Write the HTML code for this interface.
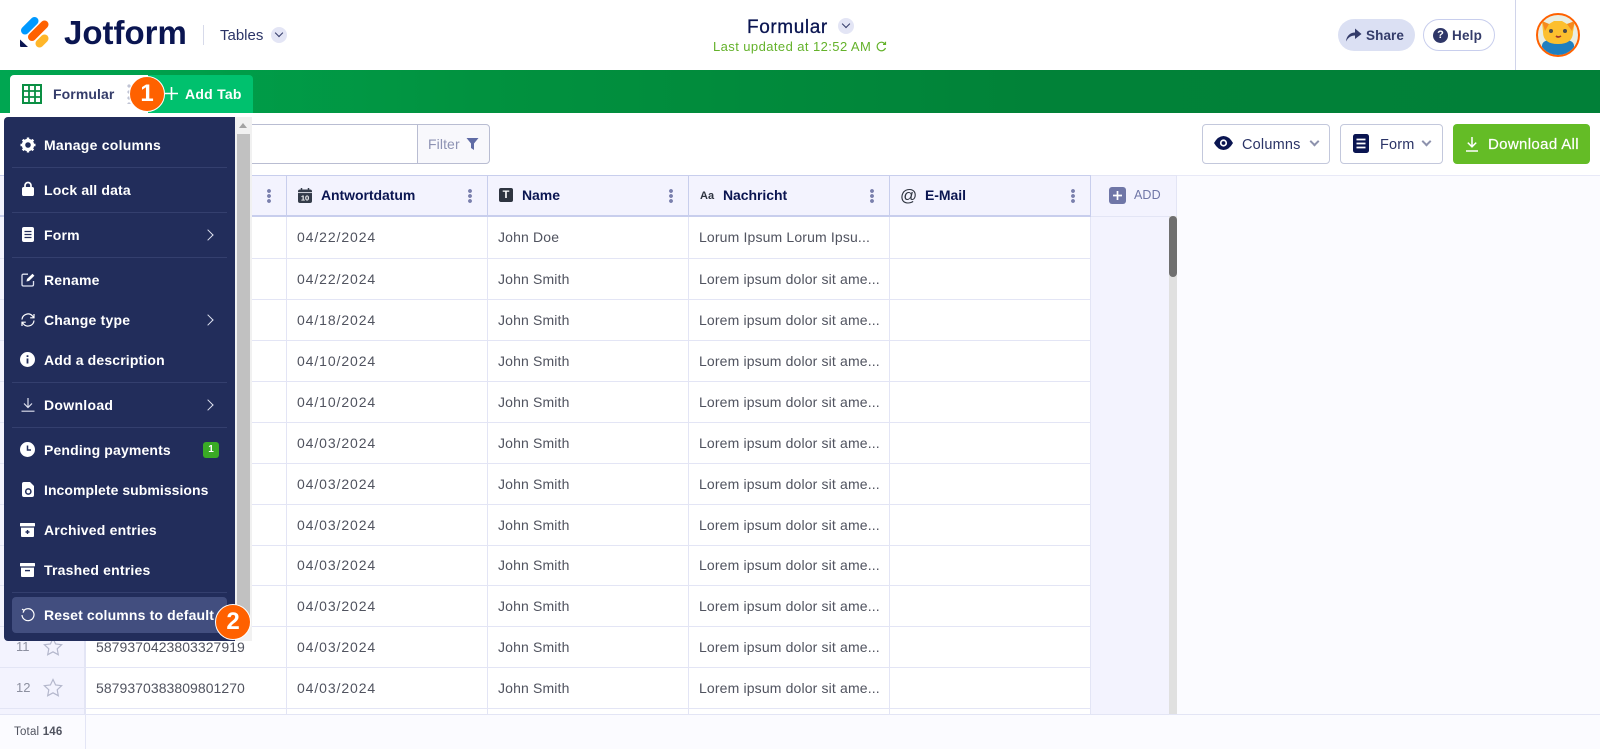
<!DOCTYPE html>
<html><head><meta charset="utf-8"><title>Formular</title>
<style>
*{box-sizing:border-box}
html,body{margin:0;padding:0;width:1600px;height:749px;overflow:hidden;background:#fff;font-family:"Liberation Sans",sans-serif;color:#0a1551}
.a{position:absolute;white-space:nowrap}
svg{display:block}
#t{position:absolute;left:0;top:175px;width:1091px;height:539px;overflow:hidden;background:#fff}
.hc{position:absolute;top:0;height:42px;background:#f3f3fe;border:1px solid #c8ceed;border-left:0;border-bottom-width:2px;font-size:14px;font-weight:bold;line-height:38px;letter-spacing:-.05px}
.dots{position:absolute;top:13px;right:15px;width:4px;height:14px;background:radial-gradient(circle at 2px 2px,#7a80ad 1.8px,transparent 2px) 0 0/4px 5px}
.r{position:absolute;left:0;width:1091px;height:41px;border-bottom:1px solid #e3e5f5;font-size:14px;color:#50535f;line-height:40px}
.r span{position:absolute;top:0;white-space:nowrap}
.n{left:16px;color:#8d90a0;font-size:13px}
.id{left:96px;letter-spacing:.05px}
.d{left:297px;letter-spacing:.9px}
.nm{left:498px;letter-spacing:.15px}
.m{left:699px;letter-spacing:.15px}
.v{position:absolute;top:42px;bottom:0;width:1px;background:#e3e5f5}
.s{position:absolute;left:43px;top:10px}
#menu{position:absolute;left:4px;top:117px;width:231px;height:524px;background:#222d5b;border-radius:4px 0 0 4px}
.i{position:absolute;left:40px;color:#fff;font-size:14px;font-weight:bold;letter-spacing:.2px;white-space:nowrap;line-height:18px}
.dv{position:absolute;left:8px;width:215px;height:1px;background:#343f6e}
.ic{position:absolute;left:16px}
.ch{position:absolute;left:200px;width:8px;height:8px;border-top:1.6px solid #dfe2f0;border-right:1.6px solid #dfe2f0;transform:rotate(45deg)}
.btn{position:absolute;top:124px;height:40px;background:#fff;border:1px solid #c3c8dc;border-radius:4px}
.cv{position:absolute;width:7px;height:7px;border-right:2px solid #8d92ad;border-bottom:2px solid #8d92ad;transform:rotate(45deg)}
.num{position:absolute;width:36px;height:36px;border-radius:50%;background:#ff6100;border:1.5px solid #fff;color:#fff;font-size:24px;font-weight:bold;text-align:center;line-height:33px;z-index:9}
</style></head><body>

<!-- top bar -->
<svg class="a" style="left:20px;top:16px" width="30" height="32" viewBox="0 0 30 32">
<path d="M5 14.5L14.5 5" stroke="#0099ff" stroke-width="8" stroke-linecap="round"/>
<path d="M12 21L24.5 8.5" stroke="#ff6100" stroke-width="8" stroke-linecap="round"/>
<path d="M19.5 27.5L24.5 22.5" stroke="#ffb629" stroke-width="8" stroke-linecap="round"/>
<path d="M0 23.5V30Q0 31 1 31H8Z" fill="#0a1551"/>
</svg>
<div class="a" style="left:64px;top:14px;font-size:33px;font-weight:bold;line-height:38px">Jotform</div>
<div class="a" style="left:203px;top:25px;width:1px;height:20px;background:#d7daea"></div>
<div class="a" style="left:220px;top:27px;font-size:15px;line-height:18px;color:#2b3467">Tables</div>
<div class="a" style="left:271px;top:27px;width:16px;height:16px;border-radius:50%;background:#e3e5f5"></div>
<div class="cv" style="left:276px;top:30px;width:6px;height:6px;border-color:#343c6a;border-width:1.3px"></div>

<div class="a" style="left:747px;top:17px;font-size:19px;line-height:22px;letter-spacing:.6px;-webkit-text-stroke:.3px #0a1551">Formular</div>
<div class="a" style="left:838px;top:18px;width:16px;height:16px;border-radius:50%;background:#e3e5f5"></div>
<div class="cv" style="left:843px;top:21px;width:6px;height:6px;border-color:#343c6a;border-width:1.3px"></div>
<div class="a" style="left:713px;top:39px;font-size:13px;line-height:16px;color:#64b22b;letter-spacing:.42px">Last updated at 12:52 AM</div>
<svg class="a" style="left:876px;top:41px" width="11" height="11" viewBox="0 0 11 11"><path d="M9.5 7A4.3 4.3 0 1 1 9 3M9.5 .8V3.4H7" fill="none" stroke="#64b22b" stroke-width="1.2"/></svg>

<div class="a" style="left:1338px;top:19px;width:77px;height:32px;border-radius:16px;background:#dbe0f3"></div>
<svg class="a" style="left:1346px;top:28px" width="16" height="14" viewBox="0 0 16 14"><path d="M0 13.5C.5 8 4 4.5 9 4.5V.5L15.5 6 9 11V7.5C5 7.5 2 9.5 0 13.5Z" fill="#343c6a"/></svg>
<div class="a" style="left:1366px;top:27px;font-size:13.5px;font-weight:bold;line-height:17px;color:#343c6a;letter-spacing:.1px">Share</div>
<div class="a" style="left:1423px;top:19px;width:72px;height:32px;border-radius:16px;border:1px solid #c8ceed;background:#fff"></div>
<div class="a" style="left:1433px;top:28px;width:15px;height:15px;border-radius:50%;background:#2f3768;color:#fff;font-size:11px;font-weight:bold;text-align:center;line-height:15px">?</div>
<div class="a" style="left:1452px;top:27px;font-size:13.5px;font-weight:bold;line-height:17px;color:#343c6a;letter-spacing:.2px">Help</div>
<div class="a" style="left:1515px;top:0;width:1px;height:70px;background:#d0d4ea"></div>
<svg class="a" style="left:1536px;top:13px" width="44" height="44" viewBox="0 0 44 44">
<defs><clipPath id="c"><circle cx="22" cy="22" r="20"/></clipPath></defs>
<circle cx="22" cy="22" r="21" fill="#e9eee2" stroke="#ff6100" stroke-width="2"/>
<g clip-path="url(#c)">
<path d="M6 44V33Q6 28 13 27H31Q38 28 38 33V44Z" fill="#1e7fc0"/>
<path d="M6 8L13 11 18 8H26L31 11 39 8 37 19Q37 31 22 31 7 31 7 19Z" fill="#fcbf2e"/>
<path d="M6 8L13 11 9 18ZM39 8L31 11 36 18Z" fill="#f58a1f"/>
<circle cx="15" cy="18" r="2" fill="#4a4a4a"/><circle cx="29" cy="18" r="2" fill="#4a4a4a"/>
<path d="M20 23Q22 25 25 23" stroke="#a0342a" stroke-width="1.6" fill="none"/>
</g></svg>

<!-- green bar -->
<div class="a" style="left:0;top:70px;width:1600px;height:43px;background:linear-gradient(90deg,#00a651,#01923f 30%,#018238 65%,#018038)"></div>
<div class="a" style="left:10px;top:75px;width:243px;height:38px;background:#00c16e;border-radius:4px 4px 0 0"></div>
<div class="a" style="left:10px;top:75px;width:138px;height:38px;background:#fff;border-radius:4px 0 0 0"></div>
<svg class="a" style="left:22px;top:84px" width="20" height="20" viewBox="0 0 20 20"><rect x="1" y="1" width="18" height="18" fill="none" stroke="#0a8f43" stroke-width="2"/><path d="M1 7H19M1 13H19M7 1V19M13 1V19" stroke="#0a8f43" stroke-width="1.8"/></svg>
<div class="a" style="left:53px;top:85px;font-size:14px;font-weight:bold;line-height:18px;color:#343c6a;letter-spacing:.1px">Formular</div>
<div class="a" style="left:127px;top:84px;width:4px;height:20px;background:radial-gradient(circle at 2px 2px,#c0c4d4 1.6px,transparent 1.8px) 0 0/4px 6px"></div>
<div class="num" style="left:129px;top:76px">1</div>
<svg class="a" style="left:165px;top:87px" width="13" height="13" viewBox="0 0 13 13"><path d="M6.5 0V13M0 6.5H13" stroke="#fff" stroke-width="1.6"/></svg>
<div class="a" style="left:185px;top:85px;font-size:14px;font-weight:bold;line-height:18px;color:#fff;letter-spacing:.25px">Add Tab</div>

<!-- toolbar -->
<div class="a" style="left:240px;top:124px;width:178px;height:40px;background:#fff;border:1px solid #b9bdd2;border-left:0"></div>
<div class="a" style="left:417px;top:124px;width:73px;height:40px;background:#f8f8fc;border:1px solid #b9bdd2;border-radius:0 4px 4px 0"></div>
<div class="a" style="left:428px;top:136px;font-size:14px;line-height:16px;color:#8d92b3;letter-spacing:.1px">Filter</div>
<svg class="a" style="left:466px;top:138px" width="13" height="12" viewBox="0 0 13 12"><path d="M.5 0H12.5L8 5.5V12L5 10V5.5Z" fill="#5f6ba5"/></svg>

<div class="btn" style="left:1202px;width:128px"></div>
<svg class="a" style="left:1214px;top:136px" width="19" height="14" viewBox="0 0 19 14"><path d="M0 7Q4 0 9.5 0T19 7Q15 14 9.5 14T0 7Z" fill="#0a1551"/><circle cx="9.5" cy="7" r="3.6" fill="#fff"/><circle cx="9.5" cy="7" r="1.9" fill="#0a1551"/></svg>
<div class="a" style="left:1242px;top:136px;font-size:14.5px;line-height:18px;color:#2b3467;letter-spacing:.2px">Columns</div>
<div class="cv" style="left:1311px;top:138px"></div>
<div class="btn" style="left:1340px;width:103px"></div>
<svg class="a" style="left:1353px;top:134px" width="16" height="19" viewBox="0 0 16 19"><rect width="16" height="19" rx="2.5" fill="#0a1551"/><path d="M3.5 5.5H12.5M3.5 9.5H12.5M3.5 13.5H12.5" stroke="#fff" stroke-width="1.7"/></svg>
<div class="a" style="left:1380px;top:136px;font-size:14.5px;line-height:18px;color:#2b3467;letter-spacing:.15px">Form</div>
<div class="cv" style="left:1423px;top:138px"></div>
<div class="a" style="left:1453px;top:124px;width:137px;height:40px;background:#64bc26;border-radius:4px"></div>
<svg class="a" style="left:1466px;top:137px" width="12" height="15" viewBox="0 0 12 15"><path d="M6 0V9.5M1.8 5.6L6 9.8 10.2 5.6M0 14H12" fill="none" stroke="#fff" stroke-width="1.5"/></svg>
<div class="a" style="left:1488px;top:136px;font-size:15px;line-height:18px;color:#fff;letter-spacing:.35px;-webkit-text-stroke:.2px #fff">Download All</div>

<!-- right background -->
<div class="a" style="left:1177px;top:175px;width:423px;height:539px;background:#fbfbff;border-top:1px solid #e8e9f7"></div>
<div class="a" style="left:1091px;top:175px;width:86px;height:539px;background:#f3f3fe;border-top:1px solid #e3e5f5;border-right:1px solid #e3e5f5"></div>
<div class="a" style="left:1091px;top:216px;width:78px;height:1px;background:#e3e5f5"></div>
<div class="a" style="left:1169px;top:216px;width:8px;height:498px;background:#e0e0e0"></div>
<div class="a" style="left:1169px;top:216px;width:8px;height:61px;background:#6f6f6f;border-radius:4px"></div>
<div class="a" style="left:1109px;top:187px;width:17px;height:17px;border-radius:3px;background:#6f76a7"></div>
<svg class="a" style="left:1113px;top:191px" width="9" height="9" viewBox="0 0 9 9"><path d="M4.5 0V9M0 4.5H9" stroke="#fff" stroke-width="1.7"/></svg>
<div class="a" style="left:1134px;top:187px;font-size:12.5px;line-height:17px;color:#6f76a7;letter-spacing:.1px">ADD</div>

<!-- table -->
<div id="t">
<div style="position:absolute;left:0;top:0;width:85px;height:539px;background:#f3f3fe;border-right:1px solid #e3e5f5"></div>
<div class="hc" style="left:0;width:287px"><i class="dots"></i></div>
<div class="hc" style="left:287px;width:201px"><span style="position:absolute;left:34px">Antwortdatum</span><i class="dots"></i></div>
<div class="hc" style="left:488px;width:201px"><span style="position:absolute;left:34px">Name</span><i class="dots"></i></div>
<div class="hc" style="left:689px;width:201px"><span style="position:absolute;left:34px">Nachricht</span><i class="dots"></i></div>
<div class="hc" style="left:890px;width:201px"><span style="position:absolute;left:35px">E-Mail</span><i class="dots"></i></div>
<svg class="a" style="left:298px;top:13px" width="14" height="15" viewBox="0 0 14 15"><rect y="1.5" width="14" height="13.5" rx="2" fill="#343c4a"/><path d="M3.5 0V3M10.5 0V3" stroke="#343c4a" stroke-width="1.5"/><path d="M0 4.6H14" stroke="#e8e8f0" stroke-width=".9"/><text x="7" y="12.6" text-anchor="middle" font-size="7.5" font-weight="bold" fill="#fff" font-family="Liberation Sans">10</text></svg>
<div class="a" style="left:499px;top:13px;width:14px;height:14px;border-radius:2px;background:#2e3440;color:#fff;font-size:11px;font-weight:bold;text-align:center;line-height:14px">T</div>
<div class="a" style="left:700px;top:12px;font-size:11px;font-weight:bold;line-height:18px;color:#2e3440">Aa</div>
<div class="a" style="left:900px;top:11px;font-size:17px;line-height:20px;color:#2e3440">@</div>

<div class="r" style="top:42px;height:42px"><span class="d">04/22/2024</span><span class="nm">John Doe</span><span class="m">Lorum Ipsum Lorum Ipsu...</span></div>
<div class="r" style="top:84px"><span class="d">04/22/2024</span><span class="nm">John Smith</span><span class="m">Lorem ipsum dolor sit ame...</span></div>
<div class="r" style="top:125px"><span class="d">04/18/2024</span><span class="nm">John Smith</span><span class="m">Lorem ipsum dolor sit ame...</span></div>
<div class="r" style="top:166px"><span class="d">04/10/2024</span><span class="nm">John Smith</span><span class="m">Lorem ipsum dolor sit ame...</span></div>
<div class="r" style="top:207px"><span class="d">04/10/2024</span><span class="nm">John Smith</span><span class="m">Lorem ipsum dolor sit ame...</span></div>
<div class="r" style="top:248px"><span class="d">04/03/2024</span><span class="nm">John Smith</span><span class="m">Lorem ipsum dolor sit ame...</span></div>
<div class="r" style="top:289px"><span class="d">04/03/2024</span><span class="nm">John Smith</span><span class="m">Lorem ipsum dolor sit ame...</span></div>
<div class="r" style="top:330px"><span class="d">04/03/2024</span><span class="nm">John Smith</span><span class="m">Lorem ipsum dolor sit ame...</span></div>
<div class="r" style="top:370px"><span class="d">04/03/2024</span><span class="nm">John Smith</span><span class="m">Lorem ipsum dolor sit ame...</span></div>
<div class="r" style="top:411px"><span class="d">04/03/2024</span><span class="nm">John Smith</span><span class="m">Lorem ipsum dolor sit ame...</span></div>
<div class="r" style="top:452px"><span class="n">11</span><svg class="s" width="20" height="19" viewBox="0 0 20 19"><path d="M10 1.5L12.6 7 18.6 7.7 14.2 11.8 15.3 17.7 10 14.8 4.7 17.7 5.8 11.8 1.4 7.7 7.4 7Z" fill="none" stroke="#b4b7cc" stroke-width="1.2"/></svg><span class="id">5879370423803327919</span><span class="d">04/03/2024</span><span class="nm">John Smith</span><span class="m">Lorem ipsum dolor sit ame...</span></div>
<div class="r" style="top:493px"><span class="n">12</span><svg class="s" width="20" height="19" viewBox="0 0 20 19"><path d="M10 1.5L12.6 7 18.6 7.7 14.2 11.8 15.3 17.7 10 14.8 4.7 17.7 5.8 11.8 1.4 7.7 7.4 7Z" fill="none" stroke="#b4b7cc" stroke-width="1.2"/></svg><span class="id">5879370383809801270</span><span class="d">04/03/2024</span><span class="nm">John Smith</span><span class="m">Lorem ipsum dolor sit ame...</span></div>
<i class="v" style="left:85px"></i><i class="v" style="left:286px"></i><i class="v" style="left:487px"></i><i class="v" style="left:688px"></i><i class="v" style="left:889px"></i><i class="v" style="left:1090px"></i>
</div>

<!-- footer -->
<div class="a" style="left:0;top:714px;width:1600px;height:35px;background:#fbfbff;border-top:1px solid #e3e5f5"></div>
<div class="a" style="left:85px;top:714px;width:1px;height:35px;background:#e3e5f5"></div>
<div class="a" style="left:14px;top:724px;font-size:11.5px;line-height:16px;color:#50535f;letter-spacing:.2px">Total <b>146</b></div>

<!-- menu -->
<div class="a" style="left:235px;top:117px;width:17px;height:524px;background:#f1f1f1"></div>
<div class="a" style="left:237px;top:134px;width:13px;height:490px;background:#c1c1c1"></div>
<div class="a" style="left:239px;top:123px;width:0;height:0;border-left:4.5px solid transparent;border-right:4.5px solid transparent;border-bottom:5px solid #a3a3a3"></div>
<div id="menu">
<svg class="ic" style="top:20px" width="16" height="16" viewBox="0 0 16 16"><circle cx="8" cy="8" r="4.5" fill="none" stroke="#fff" stroke-width="3.4"/><path d="M8 .5V3M8 13V15.5M.5 8H3M13 8H15.5M2.7 2.7L4.4 4.4M11.6 11.6L13.3 13.3M13.3 2.7L11.6 4.4M4.4 11.6L2.7 13.3" stroke="#fff" stroke-width="2.4"/></svg>
<div class="i" style="top:19px;letter-spacing:.25px">Manage columns</div><div class="dv" style="top:50px"></div>
<svg class="ic" style="top:64px;left:18px" width="12" height="15" viewBox="0 0 12 15"><path d="M3 7V4.5A3 3 0 0 1 9 4.5V7" fill="none" stroke="#fff" stroke-width="1.7"/><rect y="6" width="12" height="9" rx="1.8" fill="#fff"/></svg>
<div class="i" style="top:64px;letter-spacing:.15px">Lock all data</div><div class="dv" style="top:95px"></div>
<svg class="ic" style="top:110px;left:18px" width="12" height="15" viewBox="0 0 12 15"><rect width="12" height="15" rx="2" fill="#fff"/><path d="M2.5 4.5H9.5M2.5 7.5H9.5M2.5 10.5H9.5" stroke="#222d5b" stroke-width="1.2"/></svg>
<div class="i" style="top:109px">Form</div><i class="ch" style="top:114px"></i><div class="dv" style="top:140px"></div>
<svg class="ic" style="top:156px;left:17px" width="14" height="14" viewBox="0 0 14 14"><path d="M7 1.2H2.5Q1 1.2 1 2.7V11.5Q1 13 2.5 13H11Q12.5 13 12.5 11.5V8" fill="none" stroke="#dfe2f0" stroke-width="1.3"/><path d="M5.5 8.5L6 6 11.5 .8 13.4 2.7 8 8Z" fill="#fff"/></svg>
<div class="i" style="top:154px">Rename</div>
<svg class="ic" style="top:196px;left:17px" width="14" height="14" viewBox="0 0 14 14"><path d="M1 6.5A6 6 0 0 1 11.5 3L12.8 4.5M13 7.5A6 6 0 0 1 2.5 11L1.2 9.5M13 1V4.8H9.2M1 13V9.2H4.8" fill="none" stroke="#fff" stroke-width="1.2"/></svg>
<div class="i" style="top:194px">Change type</div><i class="ch" style="top:199px"></i>
<svg class="ic" style="top:235px" width="15" height="15" viewBox="0 0 15 15"><circle cx="7.5" cy="7.5" r="7.5" fill="#fff"/><path d="M7.5 6.5V11.5M7.5 3.2V5" stroke="#222d5b" stroke-width="1.8"/></svg>
<div class="i" style="top:234px;letter-spacing:.15px">Add a description</div><div class="dv" style="top:265px"></div>
<svg class="ic" style="top:281px;left:17px" width="14" height="14" viewBox="0 0 14 14"><path d="M7 0V9M3 5.5L7 9.5 11 5.5M.5 13.2H13.5" fill="none" stroke="#dfe2f0" stroke-width="1.2"/></svg>
<div class="i" style="top:279px;letter-spacing:.3px">Download</div><i class="ch" style="top:284px"></i><div class="dv" style="top:310px"></div>
<svg class="ic" style="top:325px" width="15" height="15" viewBox="0 0 15 15"><circle cx="7.5" cy="7.5" r="7.5" fill="#fff"/><path d="M7.5 3.5V8H11" fill="none" stroke="#222d5b" stroke-width="1.5"/></svg>
<div class="i" style="top:324px;letter-spacing:.15px">Pending payments</div>
<div style="position:absolute;left:199px;top:325px;width:16px;height:16px;border-radius:3px;background:#3aab25;color:#fff;font-size:10px;font-weight:bold;text-align:center;line-height:16px">1</div>
<svg class="ic" style="top:365px;left:18px" width="12" height="15" viewBox="0 0 12 15"><path d="M0 2Q0 0 2 0H8L12 4V13Q12 15 10 15H2Q0 15 0 13Z" fill="#fff"/><circle cx="6.3" cy="9.5" r="2.6" fill="none" stroke="#222d5b" stroke-width="1.5"/></svg>
<div class="i" style="top:364px;letter-spacing:.05px">Incomplete submissions</div>
<svg class="ic" style="top:406px" width="15" height="14" viewBox="0 0 15 14"><rect width="15" height="3.4" rx=".6" fill="#fff"/><path d="M1 4.6H14V13Q14 14 13 14H2Q1 14 1 13Z" fill="#fff"/><path d="M7.5 7V11M5.5 9H9.5" stroke="#222d5b" stroke-width="1.4"/></svg>
<div class="i" style="top:404px">Archived entries</div>
<svg class="ic" style="top:446px" width="15" height="14" viewBox="0 0 15 14"><rect width="15" height="3.4" rx=".6" fill="#fff"/><path d="M1 4.6H14V13Q14 14 13 14H2Q1 14 1 13Z" fill="#fff"/><path d="M5 7.6H10" stroke="#222d5b" stroke-width="1.4"/></svg>
<div class="i" style="top:444px">Trashed entries</div><div class="dv" style="top:475px"></div>
<div style="position:absolute;left:8px;top:480px;width:215px;height:36px;border-radius:4px;background:#424e7f"></div>
<svg class="ic" style="top:491px;left:17px" width="14" height="14" viewBox="0 0 14 14"><path d="M3 2.2A6 6 0 1 1 1 7M1 1.2L3.2 2.4 2 4.6" fill="none" stroke="#fff" stroke-width="1.2"/></svg>
<div class="i" style="top:489px;letter-spacing:.15px">Reset columns to default</div>
</div>
<div class="num" style="left:215px;top:604px">2</div>
</body></html>
